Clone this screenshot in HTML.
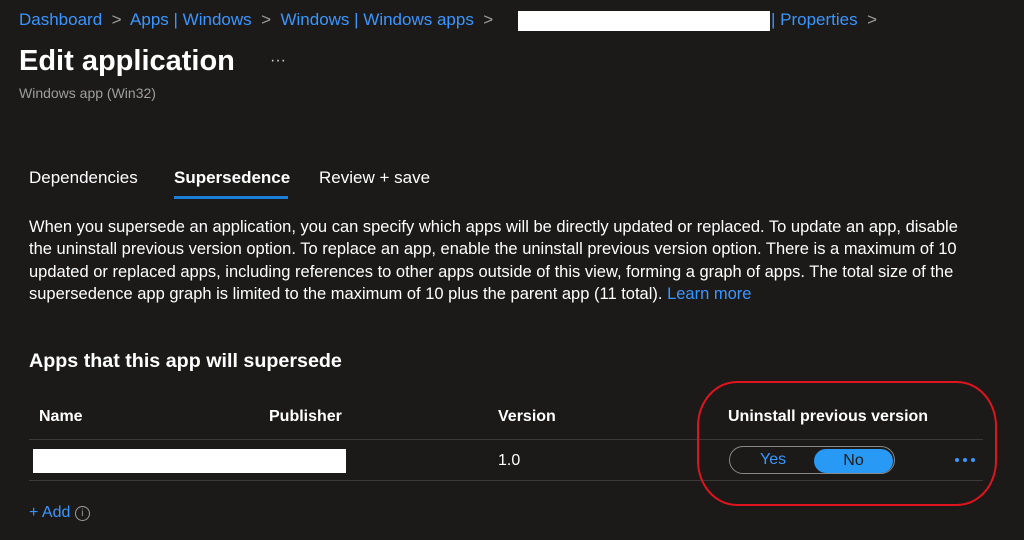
<!DOCTYPE html>
<html><head><meta charset="utf-8"><style>
body{margin:0;width:1024px;height:540px;background:#1b1a19;font-family:"Liberation Sans",sans-serif;color:#fff;position:relative;overflow:hidden}
.a{position:absolute;white-space:nowrap}
.b{color:#3a96ff}
.g{color:#9e9e9e}
</style></head><body>
<div class="a b" style="left:19px;top:10px;font-size:17px">Dashboard <span class="g">&nbsp;&gt;&nbsp;</span> Apps | Windows <span class="g">&nbsp;&gt;&nbsp;</span> Windows | Windows apps <span class="g">&nbsp;&gt;</span></div>
<div class="a" style="left:518px;top:11px;width:252px;height:20px;background:#fff"></div>
<div class="a b" style="left:771px;top:10px;font-size:17px">| Properties <span class="g">&nbsp;&gt;</span></div>
<div class="a" style="left:19px;top:45px;font-size:29px;font-weight:bold">Edit application</div>
<div class="a" style="left:270px;top:52px;font-size:16px;color:#ccc">···</div>
<div class="a g" style="left:19px;top:85px;font-size:14px">Windows app (Win32)</div>
<div class="a" style="left:29px;top:168px;font-size:17px">Dependencies</div>
<div class="a" style="left:174px;top:168px;font-size:17px;font-weight:bold">Supersedence</div>
<div class="a" style="left:174px;top:196px;width:114px;height:3px;background:#1a7fd8"></div>
<div class="a" style="left:319px;top:168px;font-size:17px">Review + save</div>
<div class="a" style="left:29px;top:216px;font-size:16.5px;line-height:22.3px">When you supersede an application, you can specify which apps will be directly updated or replaced. To update an app, disable<br>the uninstall previous version option. To replace an app, enable the uninstall previous version option. There is a maximum of 10<br>updated or replaced apps, including references to other apps outside of this view, forming a graph of apps. The total size of the<br>supersedence app graph is limited to the maximum of 10 plus the parent app (11 total). <span class="b">Learn more</span></div>
<div class="a" style="left:29px;top:350px;font-size:19.7px;font-weight:bold">Apps that this app will supersede</div>
<div class="a" style="left:39px;top:408px;font-size:16px;font-weight:bold">Name</div>
<div class="a" style="left:269px;top:408px;font-size:16px;font-weight:bold">Publisher</div>
<div class="a" style="left:498px;top:408px;font-size:16px;font-weight:bold">Version</div>
<div class="a" style="left:728px;top:408px;font-size:16px;font-weight:bold">Uninstall previous version</div>
<div class="a" style="left:29px;top:439px;width:954px;height:1px;background:#3b3a39"></div>
<div class="a" style="left:29px;top:480px;width:954px;height:1px;background:#3b3a39"></div>
<div class="a" style="left:33px;top:449px;width:313px;height:24px;background:#fff"></div>
<div class="a" style="left:498px;top:452px;font-size:16px">1.0</div>
<div class="a" style="left:729px;top:446px;width:166px;height:28px;border:1px solid #8a8886;border-radius:15px;box-sizing:border-box"></div>
<div class="a b" style="left:760px;top:451px;font-size:16px">Yes</div>
<div class="a" style="left:814px;top:449px;width:79px;height:24px;background:#2899f5;border-radius:12px;color:#1b1a19;font-size:16px;text-align:center;line-height:24px">No</div>
<div class="a" style="left:955px;top:458px;width:4px;height:4px;border-radius:2px;background:#3a96ff"></div>
<div class="a" style="left:963px;top:458px;width:4px;height:4px;border-radius:2px;background:#3a96ff"></div>
<div class="a" style="left:971px;top:458px;width:4px;height:4px;border-radius:2px;background:#3a96ff"></div>
<div class="a b" style="left:29px;top:504px;font-size:16px">+ Add <span class="g" style="display:inline-block;width:13px;height:13px;border:1px solid #9e9e9e;border-radius:50%;font-size:10px;text-align:center;line-height:13px;vertical-align:1px">i</span></div>
<div class="a" style="left:697px;top:381px;width:300px;height:125px;border:2px solid #e0141e;border-radius:40px/45px;box-sizing:border-box"></div>
</body></html>
